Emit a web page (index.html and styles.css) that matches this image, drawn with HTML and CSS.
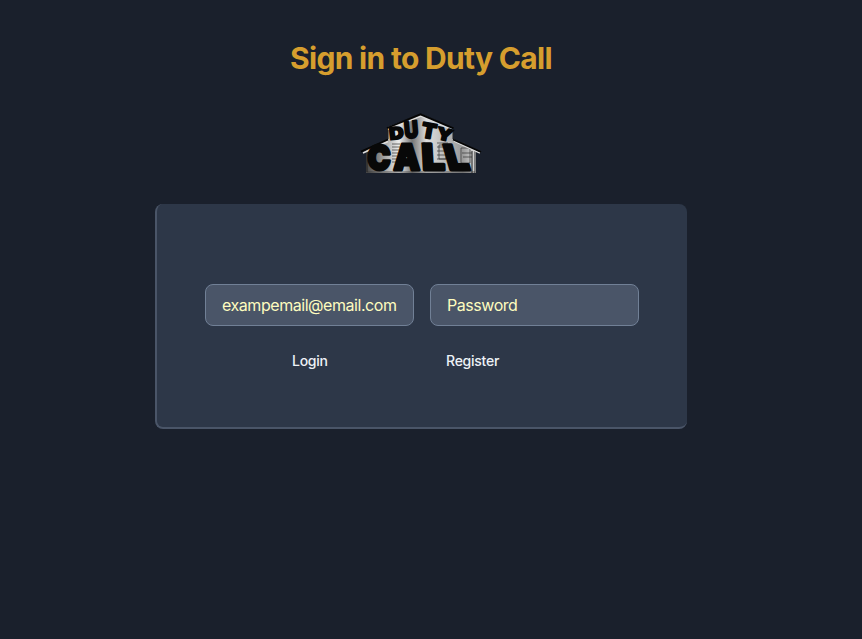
FILE: index.html
```html
<!DOCTYPE html>
<html lang="en">
<head>
<meta charset="utf-8">
<title>Sign in to Duty Call</title>
<link rel="stylesheet" href="styles.css">
</head>
<body>
<main class="page">
  <h1 class="title">Sign in to Duty Call</h1>
  <svg class="logo" viewBox="0 0 120 62" role="img" aria-label="Duty Call">
    <defs>
      <linearGradient id="wall" x1="0" x2="1">
        <stop offset="0" stop-color="#444"/><stop offset=".12" stop-color="#888"/>
        <stop offset=".3" stop-color="#eee"/><stop offset=".42" stop-color="#777"/>
        <stop offset=".55" stop-color="#ddd"/><stop offset=".72" stop-color="#bbb"/>
        <stop offset=".88" stop-color="#999"/><stop offset="1" stop-color="#ddd"/>
      </linearGradient>
    </defs>
    <path class="wall" d="M5 61V38L27 28V15L60 2l32 14v11l23 11v23z"/>
    <path class="siding" d="M31 32h8M31 35h8M31 38h7M31 41h6M31 44h5M31 47h5M31 50h5M60 31h4M76 31h11M76 35h10M76 39h10M76 43h12M76 47h12M100 31h4M101 41h10M102 45h9M6 60h108M100 36h9v15h-9zM78 33v14h7V33z"/>
    <path class="edge" d="M6 40v20M10 38v10M114 39v22M111 39v22M27 16v11M92 17v10"/>
    <path class="roof-light" d="M2 41L27 29.500M27 17.500L60 4l32 14M93 29l26 12"/>
    <path class="roof" d="M0 39.500L27 27.500M26 16L59.500 2.300l33 14M92 27.500l28 12.500"/>
    <g class="small-letters">
      <text transform="translate(29 28) rotate(-7) scale(1.25 1.05)">D</text>
      <text transform="translate(44 26.500) rotate(-5) scale(1.2 1.45)">U</text>
      <text transform="translate(59.500 25) rotate(10) scale(1.35 1.3)">T</text>
      <text transform="translate(74.500 26.500) rotate(13) scale(1.3 1.05)">Y</text>
    </g>
    <g class="big-letters">
      <text transform="translate(6.500 57.500) scale(.91 1.02)">C</text>
      <text transform="translate(32.500 57.500) scale(.98 1.06)">A</text>
      <text transform="translate(61.500 57.500) skewX(3) scale(1.18 1.06)">L</text>
      <text transform="translate(88 57.500) skewX(16) scale(1.14 1.02)">L</text>
    </g>
  </svg>
  <form class="card">
    <div class="fields">
      <input class="field" type="email" placeholder="exampemail@email.com">
      <input class="field" type="password" placeholder="Password">
    </div>
    <div class="actions">
      <button class="action" type="button">Login</button>
      <button class="action" type="button">Register</button>
    </div>
  </form>
</main>
</body>
</html>
```
FILE: styles.css
```css
* { box-sizing: border-box; }
body {
  margin: 0;
  min-height: 100vh;
  background: #1a202c;
  font-family: Inter, sans-serif;
}
.page {
  display: flex;
  flex-direction: column;
  align-items: center;
  padding: 40px 20px 0 0;
}
.title {
  margin: 0;
  font-size: 30px;
  line-height: 36px;
  font-weight: 700;
  letter-spacing: -0.68px;
  color: #d69e2e;
}
.logo {
  width: 120px;
  height: 62px;
  margin: 36px 0 30px;
  overflow: visible;
}
.wall { fill: url(#wall); }
.siding { fill: none; stroke: #333; stroke-width: .7; }
.edge { fill: none; stroke: #222; stroke-width: 1; }
.roof-light { fill: none; stroke: #ddd; stroke-width: 1.500; }
.roof { fill: none; stroke: #050505; stroke-width: 1.800; }
.small-letters, .big-letters {
  font-family: Inter, sans-serif;
  font-weight: 900;
  fill: #080808;
  stroke: #080808;
  stroke-linejoin: round;
}
.small-letters { font-size: 16px; stroke-width: 1.400; }
.big-letters { font-size: 34px; stroke-width: 2.800; }
.card {
  width: 532px;
  height: 225px;
  padding: 80px 48px 0;
  background: #2d3748;
  border: solid #4a5568;
  border-width: 0 0 2px 2px;
  border-radius: 8px;
}
.fields { display: flex; gap: 16px; }
.field {
  flex: 1;
  min-width: 0;
  height: 42px;
  padding: 0 14px 0 16px;
  background: #4a5568;
  border: 1px solid #718096;
  border-radius: 8px;
  font: 400 16px/24px Inter, sans-serif;
  letter-spacing: -0.45px;
  color: #fefcbf;
}
.field::placeholder { color: #fefcbf; opacity: 1; }
.actions {
  display: grid;
  grid-template-columns: 154px 108px;
  padding-left: 87px;
  margin-top: 25px;
}
.action {
  justify-self: start;
  padding: 0;
  border: 0;
  background: none;
  font: 500 14px/20px Inter, sans-serif;
  letter-spacing: -0.25px;
  color: #edf2f7;
}
```
